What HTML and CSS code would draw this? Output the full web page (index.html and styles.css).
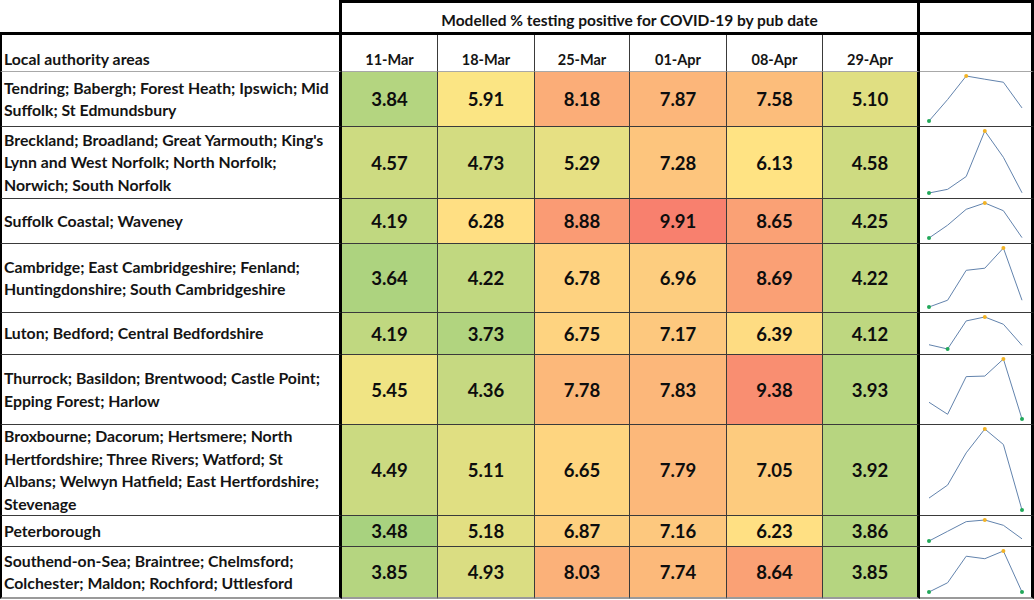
FILE: index.html
```html
<!DOCTYPE html>
<html lang="en">
<head>
<meta charset="utf-8">
<title>Modelled % testing positive for COVID-19</title>
<link rel="stylesheet" href="styles.css">
</head>
<body>
<div class="sheet">
  <div class="row head1">
    <div class="corner"></div>
    <div class="title">Modelled % testing positive for COVID-19 by pub date</div>
    <div class="spark-head"></div>
  </div>
  <div class="row head2">
    <div class="area-head">Local authority areas</div>
    <div class="date">11-Mar</div>
    <div class="date">18-Mar</div>
    <div class="date">25-Mar</div>
    <div class="date">01-Apr</div>
    <div class="date">08-Apr</div>
    <div class="date edge">29-Apr</div>
    <div class="spark"></div>
  </div>

  <div class="row">
    <div class="area">Tendring; Babergh; Forest Heath; Ipswich; Mid<br>Suffolk; St Edmundsbury</div>
    <div class="val" style="background:rgb(180,213,128)">3.84</div>
    <div class="val" style="background:rgb(251,229,132)">5.91</div>
    <div class="val" style="background:rgb(251,173,120)">8.18</div>
    <div class="val" style="background:rgb(252,182,122)">7.87</div>
    <div class="val" style="background:rgb(252,189,123)">7.58</div>
    <div class="val edge" style="background:rgb(224,223,130)">5.10</div>
    <div class="spark"><svg viewBox="0 -8.18 5 4.34" preserveAspectRatio="none"><polyline points="0,-3.84 1,-5.91 2,-8.18 3,-7.87 4,-7.58 5,-5.10"/><path class="lo" d="M0 -3.84h0"/><path class="hi" d="M2 -8.18h0"/></svg></div>
  </div>

  <div class="row">
    <div class="area">Breckland; Broadland; Great Yarmouth; King's<br>Lynn and West Norfolk; North Norfolk;<br>Norwich; South Norfolk</div>
    <div class="val" style="background:rgb(205,219,129)">4.57</div>
    <div class="val" style="background:rgb(211,220,129)">4.73</div>
    <div class="val" style="background:rgb(230,224,131)">5.29</div>
    <div class="val" style="background:rgb(253,197,125)">7.28</div>
    <div class="val" style="background:rgb(255,227,131)">6.13</div>
    <div class="val edge" style="background:rgb(206,219,129)">4.58</div>
    <div class="spark"><svg viewBox="0 -7.28 5 2.71" preserveAspectRatio="none"><polyline points="0,-4.57 1,-4.73 2,-5.29 3,-7.28 4,-6.13 5,-4.58"/><path class="lo" d="M0 -4.57h0"/><path class="hi" d="M3 -7.28h0"/></svg></div>
  </div>

  <div class="row">
    <div class="area">Suffolk Coastal; Waveney</div>
    <div class="val" style="background:rgb(192,216,128)">4.19</div>
    <div class="val" style="background:rgb(255,223,131)">6.28</div>
    <div class="val" style="background:rgb(250,155,116)">8.88</div>
    <div class="val" style="background:rgb(248,128,110)">9.91</div>
    <div class="val" style="background:rgb(250,161,117)">8.65</div>
    <div class="val edge" style="background:rgb(194,216,129)">4.25</div>
    <div class="spark"><svg viewBox="0 -9.91 5 5.72" preserveAspectRatio="none"><polyline points="0,-4.19 1,-6.28 2,-8.88 3,-9.91 4,-8.65 5,-4.25"/><path class="lo" d="M0 -4.19h0"/><path class="hi" d="M3 -9.91h0"/></svg></div>
  </div>

  <div class="row">
    <div class="area">Cambridge; East Cambridgeshire; Fenland;<br>Huntingdonshire; South Cambridgeshire</div>
    <div class="val" style="background:rgb(173,211,127)">3.64</div>
    <div class="val" style="background:rgb(193,216,128)">4.22</div>
    <div class="val" style="background:rgb(254,210,128)">6.78</div>
    <div class="val" style="background:rgb(253,205,127)">6.96</div>
    <div class="val" style="background:rgb(250,160,117)">8.69</div>
    <div class="val edge" style="background:rgb(193,216,128)">4.22</div>
    <div class="spark"><svg viewBox="0 -8.69 5 5.05" preserveAspectRatio="none"><polyline points="0,-3.64 1,-4.22 2,-6.78 3,-6.96 4,-8.69 5,-4.22"/><path class="lo" d="M0 -3.64h0"/><path class="hi" d="M4 -8.69h0"/></svg></div>
  </div>

  <div class="row">
    <div class="area">Luton; Bedford; Central Bedfordshire</div>
    <div class="val" style="background:rgb(192,216,128)">4.19</div>
    <div class="val" style="background:rgb(177,212,127)">3.73</div>
    <div class="val" style="background:rgb(254,211,128)">6.75</div>
    <div class="val" style="background:rgb(253,200,126)">7.17</div>
    <div class="val" style="background:rgb(254,220,130)">6.39</div>
    <div class="val edge" style="background:rgb(190,215,128)">4.12</div>
    <div class="spark"><svg viewBox="0 -7.17 5 3.44" preserveAspectRatio="none"><polyline points="0,-4.19 1,-3.73 2,-6.75 3,-7.17 4,-6.39 5,-4.12"/><path class="lo" d="M1 -3.73h0"/><path class="hi" d="M3 -7.17h0"/></svg></div>
  </div>

  <div class="row">
    <div class="area">Thurrock; Basildon; Brentwood; Castle Point;<br>Epping Forest; Harlow</div>
    <div class="val" style="background:rgb(240,228,132)">5.45</div>
    <div class="val" style="background:rgb(198,217,129)">4.36</div>
    <div class="val" style="background:rgb(252,184,122)">7.78</div>
    <div class="val" style="background:rgb(252,183,122)">7.83</div>
    <div class="val" style="background:rgb(249,142,113)">9.38</div>
    <div class="val edge" style="background:rgb(183,214,128)">3.93</div>
    <div class="spark"><svg viewBox="0 -9.38 5 5.45" preserveAspectRatio="none"><polyline points="0,-5.45 1,-4.36 2,-7.78 3,-7.83 4,-9.38 5,-3.93"/><path class="lo" d="M5 -3.93h0"/><path class="hi" d="M4 -9.38h0"/></svg></div>
  </div>

  <div class="row">
    <div class="area">Broxbourne; Dacorum; Hertsmere; North<br>Hertfordshire; Three Rivers; Watford; St<br>Albans; Welwyn Hatfield; East Hertfordshire;<br>Stevenage</div>
    <div class="val" style="background:rgb(203,218,129)">4.49</div>
    <div class="val" style="background:rgb(224,223,130)">5.11</div>
    <div class="val" style="background:rgb(254,213,128)">6.65</div>
    <div class="val" style="background:rgb(252,184,122)">7.79</div>
    <div class="val" style="background:rgb(253,203,126)">7.05</div>
    <div class="val edge" style="background:rgb(183,213,128)">3.92</div>
    <div class="spark"><svg viewBox="0 -7.79 5 3.87" preserveAspectRatio="none"><polyline points="0,-4.49 1,-5.11 2,-6.65 3,-7.79 4,-7.05 5,-3.92"/><path class="lo" d="M5 -3.92h0"/><path class="hi" d="M3 -7.79h0"/></svg></div>
  </div>

  <div class="row">
    <div class="area">Peterborough</div>
    <div class="val" style="background:rgb(168,210,127)">3.48</div>
    <div class="val" style="background:rgb(226,223,130)">5.18</div>
    <div class="val" style="background:rgb(253,208,127)">6.87</div>
    <div class="val" style="background:rgb(253,200,126)">7.16</div>
    <div class="val" style="background:rgb(255,224,131)">6.23</div>
    <div class="val edge" style="background:rgb(181,213,128)">3.86</div>
    <div class="spark"><svg viewBox="0 -7.16 5 3.68" preserveAspectRatio="none"><polyline points="0,-3.48 1,-5.18 2,-6.87 3,-7.16 4,-6.23 5,-3.86"/><path class="lo" d="M0 -3.48h0"/><path class="hi" d="M3 -7.16h0"/></svg></div>
  </div>

  <div class="row">
    <div class="area">Southend-on-Sea; Braintree; Chelmsford;<br>Colchester; Maldon; Rochford; Uttlesford</div>
    <div class="val" style="background:rgb(181,213,128)">3.85</div>
    <div class="val" style="background:rgb(218,221,130)">4.93</div>
    <div class="val" style="background:rgb(251,177,121)">8.03</div>
    <div class="val" style="background:rgb(252,185,122)">7.74</div>
    <div class="val" style="background:rgb(250,161,117)">8.64</div>
    <div class="val edge" style="background:rgb(181,213,128)">3.85</div>
    <div class="spark"><svg viewBox="0 -8.64 5 4.79" preserveAspectRatio="none"><polyline points="0,-3.85 1,-4.93 2,-8.03 3,-7.74 4,-8.64 5,-3.85"/><path class="lo" d="M0 -3.85h0"/><path class="lo" d="M5 -3.85h0"/><path class="hi" d="M4 -8.64h0"/></svg></div>
  </div>
</div>
</body>
</html>
```

FILE: styles.css
```css
* {
  box-sizing: border-box;
}

html, body {
  margin: 0;
  padding: 0;
  background: #ffffff;
}

body {
  font-family: "Lato", "Liberation Sans", sans-serif;
  font-weight: 700;
  color: #141414;
}

.sheet {
  display: grid;
  width: 1034px;
  grid-template-columns: 342px 96px 97px 95px 97px 96px 97px 114px;
  grid-template-rows: 35px 37px 55px 72px 45px 69px 42px 70px 91px 31px 52px;
}

.row {
  display: contents;
}

.row > div {
  border-right: 1px solid #3a3a3a;
  border-bottom: 1px solid #3a3a3a;
  min-width: 0;
}

/* header row 1 */
.head1 > .corner {
  border-right: 3px solid #000;
  border-bottom: 3px solid #000;
}

.head1 > .title {
  grid-column: 2 / 8;
  border-top: 3px solid #000;
  border-right: 3px solid #000;
  border-bottom: 3px solid #000;
  display: flex;
  align-items: flex-end;
  justify-content: center;
  padding-bottom: 3px;
  font-size: 15.5px;
}

.head1 > .spark-head {
  border-top: 3px solid #000;
  border-right: 3px solid #000;
  border-bottom: 3px solid #000;
}

/* header row 2 */
.head2 > div {
  border-bottom-color: #a8a8a8;
}

.head2 > .area-head {
  border-left: 2px solid #000;
  border-right: 3px solid #000;
  display: flex;
  align-items: flex-end;
  padding: 0 0 3px 2px;
  font-size: 15.8px;
}

.date {
  display: flex;
  align-items: flex-end;
  justify-content: center;
  padding-bottom: 3px;
  font-size: 14.5px;
}

/* body */
.row > .area {
  border-left: 2px solid #000;
  border-right: 3px solid #000;
  padding: 0 4px 0 2px;
  display: flex;
  align-items: center;
  font-size: 15.8px;
  line-height: 22.5px;
  white-space: nowrap;
}

.val {
  display: flex;
  align-items: center;
  justify-content: center;
  font-size: 18.5px;
  color: #0d0d0d;
}

.row > .edge {
  border-right: 3px solid #000;
}

.row > .spark {
  border-right: 3px solid #000;
  padding: 4px 9px 5px 9px;
}

.spark svg {
  display: block;
  width: 100%;
  height: 100%;
  overflow: visible;
}

.spark polyline {
  fill: none;
  stroke: #6283ad;
  stroke-width: 1;
  stroke-linejoin: round;
  vector-effect: non-scaling-stroke;
}

.spark .lo,
.spark .hi {
  fill: none;
  stroke-width: 4;
  stroke-linecap: round;
  vector-effect: non-scaling-stroke;
}

.spark .lo {
  stroke: #22a85a;
}

.spark .hi {
  stroke: #f2b325;
}

.row:last-child > div {
  border-bottom: 2px solid #9a9a9a;
}
```
